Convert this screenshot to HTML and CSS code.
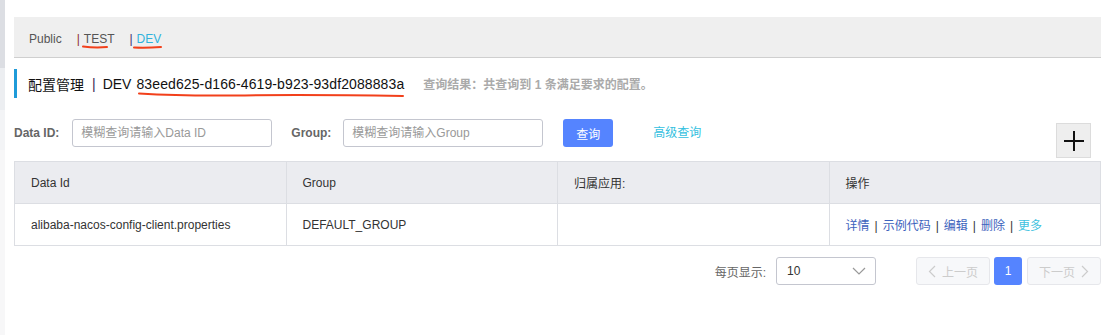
FILE: index.html
```html
<!DOCTYPE html>
<html lang="zh-CN">

<head>
    <meta charset="UTF-8">
    <title>配置管理</title>
    <link rel="stylesheet" href="styles.css">
</head>

<body>
    <div class="side"></div>

    <div class="main">
        <div class="ns-bar">
            <span class="ns">Public</span>
            <span class="ns-sep sep-red">|</span>
            <span class="ns">TEST</span>
            <span class="ns-sep sep-navy">|</span>
            <span class="ns active">DEV</span>
        </div>

        <div class="title">
            <span class="title-name">配置管理</span>
            <span class="title-sep">|</span>
            <span>DEV</span>
            <span class="title-id">83eed625-d166-4619-b923-93df2088883a</span>
            <span class="title-result">查询结果：共查询到 1 条满足要求的配置。</span>
        </div>

        <div class="search">
            <label class="search-label">Data ID:</label>
            <input class="search-input" type="text" placeholder="模糊查询请输入Data ID">
            <label class="search-label group-label">Group:</label>
            <input class="search-input" type="text" placeholder="模糊查询请输入Group">
            <button class="btn-query">查询</button>
            <a class="advanced">高级查询</a>
            <button class="btn-add">
                <svg width="22" height="22" viewBox="0 0 22 22">
                    <path d="M11 1v20M1 11h20" stroke="#111" stroke-width="2" fill="none" />
                </svg>
            </button>
        </div>

        <table class="cfg-table">
            <thead>
                <tr>
                    <th>Data Id</th>
                    <th>Group</th>
                    <th>归属应用:</th>
                    <th>操作</th>
                </tr>
            </thead>
            <tbody>
                <tr>
                    <td>alibaba-nacos-config-client.properties</td>
                    <td>DEFAULT_GROUP</td>
                    <td></td>
                    <td class="ops">
                        <a>详情</a><span class="op-sep">|</span><a>示例代码</a><span class="op-sep">|</span><a>编辑</a><span class="op-sep">|</span><a>删除</a><span class="op-sep">|</span><a class="more">更多</a>
                    </td>
                </tr>
            </tbody>
        </table>

        <div class="pager">
            <span class="pager-label">每页显示:</span>
            <div class="page-size">
                <span>10</span>
                <svg width="14" height="8" viewBox="0 0 14 8">
                    <path d="M1 1l6 6 6-6" stroke="#999" stroke-width="1.2" fill="none" />
                </svg>
            </div>
            <button class="page-btn prev">
                <svg width="8" height="13" viewBox="0 0 8 13">
                    <path d="M7 1L1.5 6.5 7 12" stroke="#ccc" stroke-width="1.2" fill="none" />
                </svg>
                上一页
            </button>
            <button class="page-num">1</button>
            <button class="page-btn next">
                下一页
                <svg width="8" height="13" viewBox="0 0 8 13">
                    <path d="M1 1l5.5 5.5L1 12" stroke="#ccc" stroke-width="1.2" fill="none" />
                </svg>
            </button>
        </div>
    </div>

    <!-- hand-drawn marks over the screenshot -->
    <svg class="marks" width="1108" height="335" viewBox="0 0 1108 335">
        <g stroke="#f2401b" stroke-width="2" fill="none" stroke-linecap="round">
            <path d="M83 46.5q12 1.5 24 0.5" />
            <path d="M134 47.5q13 0.5 27 -0.5" />
            <path d="M139 93.5c25 1.5 50 2.5 95 2c60 -1 110 -0.5 169 0.5" />
        </g>
    </svg>
</body>

</html>
```

FILE: styles.css
```css
body {
    margin: 0;
    display: flex;
    min-height: 335px;
    background: #fff;
    font-family: "Liberation Sans", "Noto Sans CJK SC", sans-serif;
    font-size: 12px;
    color: #333;
}

.side {
    width: 5px;
    flex-shrink: 0;
    background: linear-gradient(#dcdee3 0, #dcdee3 68px, #eceef1 68px, #eceef1 110px, #f3f4f6 110px, #f3f4f6 150px, #f7f7f8 150px);
}

.main {
    flex: 1;
    padding: 17px 7px 0 9px;
}

.ns-bar {
    display: flex;
    align-items: center;
    box-sizing: border-box;
    height: 41px;
    padding: 3px 0 0 15px;
    background-color: #efefef;
    border-bottom: 1px solid #cfcfcf;
    color: #555;
}

.ns {
    margin-right: 15px;
}

.ns.active {
    color: #2fb3dc;
}

.ns-sep {
    margin-right: 4px;
}

.sep-red {
    color: #8d2d2d;
}

.sep-navy {
    color: #3c2b6e;
}

.title {
    display: flex;
    align-items: center;
    height: 29px;
    margin-top: 11px;
    padding-left: 11px;
    border-left: 3px solid #1f9bd9;
    font-size: 14px;
    color: #111;
}

.title-sep {
    margin: 0 7px 0 8px;
    color: #3a2350;
}

.title-id {
    margin-left: 5px;
    letter-spacing: 0.11px;
}

.title-result {
    margin-left: 19px;
    font-size: 12px;
    font-weight: bold;
    color: #aaa;
}

.search {
    display: flex;
    align-items: flex-start;
    margin-top: 21px;
}

.search-label {
    line-height: 28px;
    font-weight: bold;
    color: #666;
    margin-right: 13px;
}

.group-label {
    margin-left: 19px;
    margin-right: 12px;
}

.search-input {
    box-sizing: border-box;
    width: 200px;
    height: 28px;
    padding: 0 8px;
    border: 1px solid #c4c6cf;
    border-radius: 3px;
    font-family: inherit;
    font-size: 12px;
    color: #333;
}

.search-input::placeholder {
    color: #999;
}

.btn-query {
    width: 50px;
    height: 28px;
    margin-left: 20px;
    border: none;
    border-radius: 3px;
    background-color: #5584ff;
    color: #fff;
    font-family: inherit;
    font-size: 12px;
}

.advanced {
    line-height: 28px;
    margin-left: 40px;
    color: #33bfe0;
}

.btn-add {
    display: flex;
    align-items: center;
    justify-content: center;
    box-sizing: border-box;
    width: 35px;
    height: 35px;
    margin: 4px 10px 0 auto;
    padding: 0;
    border: 1px solid #dcdcdc;
    background-color: #eee;
}

.cfg-table {
    width: 100%;
    margin-top: 3px;
    border-collapse: collapse;
    border: 1px solid #dcdee3;
    table-layout: fixed;
}

.cfg-table th,
.cfg-table td {
    height: 41px;
    padding: 0 16px;
    border: 1px solid #dcdee3;
    text-align: left;
    font-weight: normal;
    color: #333;
}

.cfg-table th {
    background-color: #ebecf0;
}

.ops a {
    color: #3d63bd;
}

.ops a.more {
    color: #3fc2e0;
}

.op-sep {
    margin: 0 5px;
    color: #333;
}

.pager {
    display: flex;
    align-items: center;
    justify-content: flex-end;
    margin-top: 11px;
}

.pager-label {
    color: #666;
    margin-right: 10px;
}

.page-size {
    display: flex;
    align-items: center;
    justify-content: space-between;
    box-sizing: border-box;
    width: 100px;
    height: 28px;
    padding: 0 9px 0 10px;
    border: 1px solid #c4c6cf;
    border-radius: 3px;
    color: #333;
}

.page-btn {
    display: flex;
    align-items: center;
    justify-content: center;
    gap: 6px;
    box-sizing: border-box;
    width: 74px;
    height: 28px;
    border: 1px solid #e6e7eb;
    border-radius: 3px;
    background-color: #f7f8fa;
    color: #ccc;
    font-family: inherit;
    font-size: 12px;
}

.prev {
    margin-left: 40px;
}

.page-num {
    width: 28px;
    height: 28px;
    margin: 0 5px 0 4px;
    border: none;
    border-radius: 3px;
    background-color: #5584ff;
    color: #fff;
    font-family: inherit;
    font-size: 12px;
}

.marks {
    position: absolute;
    left: 0;
    top: 0;
    pointer-events: none;
}
```
